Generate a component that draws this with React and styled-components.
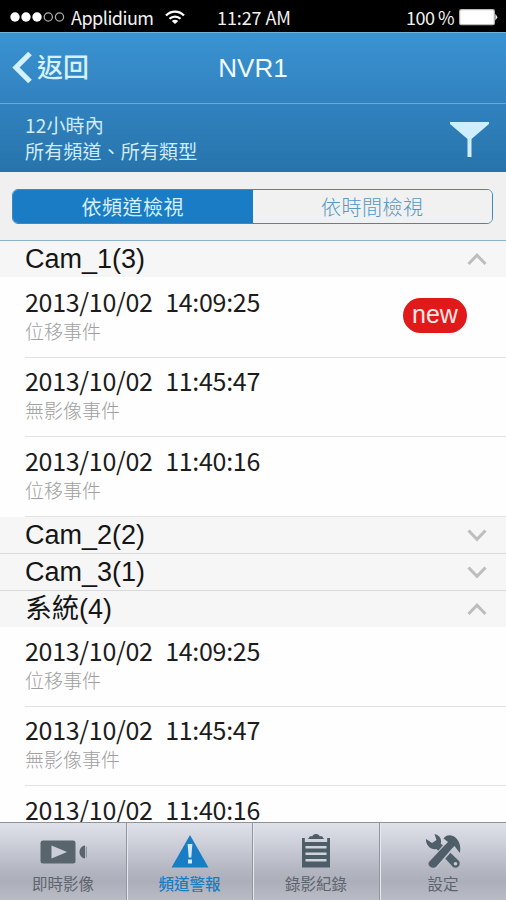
import styled, { createGlobalStyle } from "styled-components";

const SANS = `"Liberation Sans", "Noto Sans CJK TC", sans-serif`;
const CJK = `"Noto Sans CJK TC", sans-serif`;

const GlobalStyle = createGlobalStyle`
  * { box-sizing: border-box; }
  body {
    margin: 0;
    overflow: hidden;
    background: white;
  }
  p { margin: 0; }
  svg { display: block; flex: none; }
`;

const Screen = styled.div`
  width: 506px;
  height: 900px;
  display: flex;
  flex-direction: column;
  overflow: hidden;
  background: #fefefe;
  font-family: ${SANS};
`;

const StatusBar = styled.div`
  flex: none;
  height: 32px;
  display: grid;
  grid-template-columns: 207px 100px 1fr;
  align-items: center;
  padding: 1px 8px 0 10px;
  background: black;
  color: #f2f2f2;
  font-family: ${CJK};
  font-size: 18px;
  line-height: 30px;
  white-space: nowrap;

  svg { margin-top: 1px; }
`;

const StatusGroup = styled.div`
  display: flex;
  align-items: center;
  justify-content: ${props => props.$end ? 'flex-end' : 'flex-start'};
`;

const StatusText = styled.span`
  margin-left: ${props => props.$left || 0}px;
  margin-right: ${props => props.$right || 0}px;
  letter-spacing: ${props => props.$spacing || 0}px;
`;

const Header = styled.header`
  flex: none;
  height: 140px;
  background: linear-gradient(#3a93d1, #3182bf 50%, #2774ac);
  border-top: 1px solid #72b2df;
`;

const NavBar = styled.div`
  height: 71px;
  display: grid;
  grid-template-columns: 153px 200px 153px;
  align-items: center;
  border-bottom: 1px solid #68a9d6;
`;

const BackButton = styled.div`
  display: flex;
  align-items: center;
  padding-left: 12px;
  color: #d3f1ff;
  font: 500 26px/40px ${CJK};
`;

const BackLabel = styled.span`
  margin: -4px 0 0 5px;
`;

const Title = styled.h1`
  margin: 0;
  text-align: center;
  color: #f0faff;
  font-size: 26px;
  font-weight: 400;
  line-height: 40px;
`;

const FilterBar = styled.div`
  height: 68px;
  display: flex;
  justify-content: space-between;
  padding: 8px 16px 0 25px;
  color: #d0ecfb;
  font-family: ${CJK};
  font-size: 19px;
  line-height: 26px;
  letter-spacing: 0.15px;
`;

const FunnelButton = styled.div`
  padding-top: 4px;
`;

const SegmentBar = styled.div`
  flex: none;
  height: 69px;
  padding: 17px 13px 0 12px;
  background: #f0f0f0;
  border-bottom: 1px solid #8db2cb;
`;

const Segments = styled.div`
  height: 35px;
  display: flex;
  overflow: hidden;
  border: 1px solid #4189bd;
  border-radius: 6px;
`;

const Segment = styled.div`
  flex: 1;
  text-align: center;
  background: ${props => props.$active ? '#197cc4' : '#f1f1f1'};
  color: ${props => props.$active ? '#d5efff' : '#5598c3'};
  font-family: ${CJK};
  font-weight: ${props => props.$active ? 400 : 300};
  font-size: 20px;
  line-height: 33px;
  letter-spacing: 0.5px;
`;

const List = styled.div`
  flex: 1;
  min-height: 0;
  overflow: hidden;
`;

const SectionHeader = styled.div`
  height: ${props => props.$height}px;
  display: flex;
  align-items: center;
  justify-content: space-between;
  padding: 0 19px 0 25px;
  background: #f6f6f6;
  border-bottom: ${props => props.$open ? 'none' : '1px solid #dadada'};
  color: #151515;
  font-size: 27px;
  line-height: 34px;
  white-space: nowrap;
`;

const Event = styled.div`
  height: ${props => props.$height}px;
  margin-left: 25px;
  display: flex;
  align-items: flex-end;
  justify-content: space-between;
  border-bottom: 1px solid #e2e2e2;
`;

const EventTime = styled.p`
  color: #1c1c1c;
  font-family: ${CJK};
  font-size: 25px;
  line-height: 32px;
  letter-spacing: -0.3px;
  word-spacing: 1px;
  white-space: pre;
`;

const EventType = styled.p`
  height: 40px;
  padding-top: 1px;
  color: #a0a0a0;
  font-family: ${CJK};
  font-weight: 300;
  font-size: 19px;
  line-height: 26px;
`;

const Badge = styled.span`
  width: 64px;
  height: 35px;
  margin: 0 39px 24px 0;
  border-radius: 18px;
  background: #e0191b;
  color: #ffe9e5;
  font-size: 25px;
  line-height: 33px;
  text-align: center;
`;

const TabBar = styled.nav`
  flex: none;
  height: 78px;
  display: grid;
  grid-template-columns: 127px 126px 127px 126px;
  border-top: 1px solid #8f9297;
  background: linear-gradient(#dfe1e9 0%, #ced1da 25%, #b4b7c2 60%, #acafba 76%, #b9bcc5 100%);
`;

const Tab = styled.div`
  display: flex;
  flex-direction: column;
  align-items: center;
  padding-top: 10px;
  border-right: 1px solid #93969d;
  box-shadow: inset 1px 0 #e6e8ee;
  color: ${props => props.$active ? '#197dc2' : '#5d646d'};
  font-family: ${CJK};
  font-weight: ${props => props.$active ? 500 : 400};
  font-size: 15.5px;
  line-height: 22px;

  &:first-child { box-shadow: none; }
  &:last-child { border-right: none; }
`;

const TabLabel = styled.span`
  margin-top: 3px;
`;

const Signal = () => (
  <svg width="56" height="14" viewBox="0 0 56 14">
    {[5, 16, 27].map(x => <circle key={x} cx={x} cy="7" r="4.7" fill="white" />)}
    {[38.3, 49.5].map(x => <circle key={x} cx={x} cy="7" r="4.1" fill="none" stroke="#aaa" strokeWidth="1.3" />)}
  </svg>
);

const Wifi = () => (
  <svg width="20" height="15" viewBox="0 0 20 15" fill="none" stroke="white" strokeWidth="2.3">
    <path d="M1 5.5C6 .3 14 .3 19 5.5" />
    <path d="M4.5 8.8C7.5 5.8 12.5 5.8 15.5 8.8" />
    <path d="M10 14L6.8 11C8.6 9.3 11.4 9.3 13.2 11Z" fill="white" stroke="none" />
  </svg>
);

const Battery = () => (
  <svg width="39" height="17" viewBox="0 0 39 17">
    <rect x="0.7" y="0.7" width="34.6" height="15" rx="1.5" fill="white" stroke="#bbb" strokeWidth="1.2" />
    <path d="M36.3 4.8L38.6 8.2L36.3 11.6Z" fill="#eee" />
  </svg>
);

const BackArrow = () => (
  <svg width="20" height="34" viewBox="0 0 20 34">
    <path d="M18 2.5L4 16.5L18 30.5" fill="none" stroke="#d3f1ff" strokeWidth="5.2" />
  </svg>
);

const Funnel = () => (
  <svg width="42" height="42" viewBox="0 0 42 42">
    <path d="M2 6H41V8L23.5 23V41H19.5V23L2 8Z" fill="#cfeeff" />
  </svg>
);

const Chevron = ({ up }) => (
  <svg width="20" height="14" viewBox="0 0 20 14">
    <path d={up ? "M1.5 12L10 3.2L18.5 12" : "M1.5 2.5L10 11.3L18.5 2.5"} fill="none" stroke="#bdbdbd" strokeWidth="3" />
  </svg>
);

const CameraIcon = () => (
  <svg width="48" height="36" viewBox="0 0 48 36">
    <rect x="1.5" y="7.5" width="35" height="23" rx="2.5" fill="#59656c" />
    <path d="M12.5 12.5L28 19L12.5 25.5Z" fill="#cbced6" />
    <path d="M46 12.5V25.5C43 25.5 40.5 22.5 40.5 19S43 12.5 46 12.5Z" fill="#59656c" />
    <path d="M47.3 13.5V24.5" stroke="#858b94" />
  </svg>
);

const AlertIcon = () => (
  <svg width="38" height="36" viewBox="0 0 38 36">
    <path d="M19 2L37.5 34.5H.5Z" fill="#187dc4" />
    <path d="M16.6 11H21.4L20.3 24.5H17.7Z" fill="#d5e8f5" />
    <rect x="17" y="26.5" width="4" height="4" fill="#d5e8f5" />
  </svg>
);

const ClipboardIcon = () => (
  <svg width="30" height="36" viewBox="0 0 30 36" fill="#4c5d67">
    <path d="M7 6L9 3.2H11.5C12 .2 18 .2 18.5 3.2H21L23 6Z" />
    <path d="M1 5H3.8V9H26.2V5H29V34.5H1Z" />
    <path d="M4.5 14.2H25.5M4.5 20.7H25.5M4.5 27.2H25.5" stroke="#cfd4dc" strokeWidth="2.6" />
  </svg>
);

const ToolsIcon = () => (
  <svg width="36" height="36" viewBox="0 0 36 36" fill="#4f5f69">
    <path d="M1 6L7 10L11.5 7L9.5 1C14.5 2 17 6 15.8 10.5L34 28C36.5 32 32 36.5 28 34L11.5 16C6.5 17.5 .5 12.5 1 6Z" />
    <path d="M7 33L23 14.5" stroke="#c1c4ce" strokeWidth="10.5" />
    <path d="M18.5 5.5C21 1.5 27 .8 31.5 5.5C35 9.5 36 14 34.8 20L29.5 13L26.5 16L11 34C8 36.5 1.500 32.500 4 29L19.500 12.500L23 9Z" />
    <circle cx="30.5" cy="30.8" r="1.8" fill="#c6cad3" />
  </svg>
);

const events = [
  { time: "2013/10/02  14:09:25", type: "位移事件" },
  { time: "2013/10/02  11:45:47", type: "無影像事件" },
  { time: "2013/10/02  11:40:16", type: "位移事件" },
];

const sections = [
  { name: "Cam_1(3)", open: true, height: 36, rows: [81, 79, 80], fresh: true },
  { name: "Cam_2(2)", height: 37 },
  { name: "Cam_3(1)", height: 37 },
  { name: "系統(4)", open: true, height: 36, rows: [80, 79, 80] },
];

const tabs = [
  { label: "即時影像", icon: <CameraIcon /> },
  { label: "頻道警報", icon: <AlertIcon />, active: true },
  { label: "錄影紀錄", icon: <ClipboardIcon /> },
  { label: "設定", icon: <ToolsIcon /> },
];

const Section = ({ section }) => (
  <>
    <SectionHeader $open={section.open} $height={section.height}>
      <span>{section.name}</span>
      <Chevron up={section.open} />
    </SectionHeader>
    {section.open && events.map((event, i) => (
      <Event key={event.time} $height={section.rows[i]}>
        <div>
          <EventTime>{event.time}</EventTime>
          <EventType>{event.type}</EventType>
        </div>
        {section.fresh && i === 0 && <Badge>new</Badge>}
      </Event>
    ))}
  </>
);

export default function App() {
  return (
    <Screen>
      <GlobalStyle />
      <StatusBar>
        <StatusGroup>
          <Signal />
          <StatusText $left={5} $right={11} $spacing={-0.5}>Applidium</StatusText>
          <Wifi />
        </StatusGroup>
        <StatusText $spacing={-0.1}>11:27 AM</StatusText>
        <StatusGroup $end>
          <StatusText $right={5} $spacing={-0.5}>100 %</StatusText>
          <Battery />
        </StatusGroup>
      </StatusBar>
      <Header>
        <NavBar>
          <BackButton>
            <BackArrow />
            <BackLabel>返回</BackLabel>
          </BackButton>
          <Title>NVR1</Title>
        </NavBar>
        <FilterBar>
          <div>
            <p>12小時內</p>
            <p>所有頻道、所有類型</p>
          </div>
          <FunnelButton>
            <Funnel />
          </FunnelButton>
        </FilterBar>
      </Header>
      <SegmentBar>
        <Segments>
          <Segment $active>依頻道檢視</Segment>
          <Segment>依時間檢視</Segment>
        </Segments>
      </SegmentBar>
      <List>
        {sections.map(section => <Section key={section.name} section={section} />)}
      </List>
      <TabBar>
        {tabs.map(tab => (
          <Tab key={tab.label} $active={tab.active}>
            {tab.icon}
            <TabLabel>{tab.label}</TabLabel>
          </Tab>
        ))}
      </TabBar>
    </Screen>
  );
}
